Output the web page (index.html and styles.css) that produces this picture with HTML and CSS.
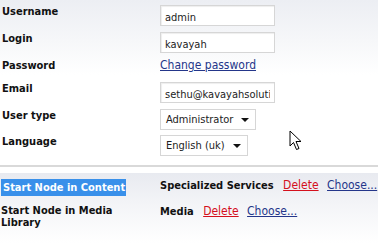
FILE: index.html
```html
<!DOCTYPE html>
<html lang="en">
<head>
    <meta charset="UTF-8">
    <title>User details</title>
    <link rel="stylesheet" href="styles.css">
</head>
<body>
    <div class="user-form">
        <div class="row row-input">
            <div class="label">Username</div>
            <div class="field"><input class="text-box" type="text" value="admin"></div>
        </div>
        <div class="row row-input">
            <div class="label">Login</div>
            <div class="field"><input class="text-box" type="text" value="kavayah"></div>
        </div>
        <div class="row row-link">
            <div class="label">Password</div>
            <div class="field"><a class="link-blue" href="#">Change password</a></div>
        </div>
        <div class="row row-input">
            <div class="label">Email</div>
            <div class="field"><input class="text-box" type="text" value="sethu@kavayahsolutions.com"></div>
        </div>
        <div class="row row-select">
            <div class="label">User type</div>
            <div class="field"><span class="drop drop-type">Administrator<span class="arrow"></span></span></div>
        </div>
        <div class="row row-select">
            <div class="label">Language</div>
            <div class="field"><span class="drop drop-lang">English (uk)<span class="arrow"></span></span></div>
        </div>
    </div>

    <div class="divider"></div>

    <div class="start-nodes">
        <div class="row node-row">
            <div class="label"><span class="selected">Start Node in Content</span></div>
            <div class="field">
                <b>Specialized Services</b>
                <a class="link-red" href="#">Delete</a>
                <a class="link-blue" href="#">Choose...</a>
            </div>
        </div>
        <div class="row node-row">
            <div class="label">Start Node in Media Library</div>
            <div class="field">
                <b>Media</b>
                <a class="link-red" href="#">Delete</a>
                <a class="link-blue" href="#">Choose...</a>
            </div>
        </div>
    </div>

    <svg class="cursor" width="14" height="22" viewBox="0 0 14 22">
        <path d="M1 1 L1 16 L4.5 12.5 L7.5 19.5 L10 18.5 L7 11.5 L12 11.5 Z" fill="#fff" stroke="#000" stroke-width="1"/>
    </svg>
</body>
</html>
```

FILE: styles.css
```css
* {
    margin: 0;
    padding: 0;
    box-sizing: border-box;
}

body {
    width: 378px;
    height: 244px;
    overflow: hidden;
    position: relative;
    font-family: "DejaVu Sans Condensed", "DejaVu Sans", sans-serif;
    font-size: 12px;
    line-height: 13px;
    color: #111;
    background: #fff;
}

.user-form {
    padding: 5px 0 0 2px;
    height: 165px;
    background: linear-gradient(#eceef3 0px, #f6f7f9 40px, #fff 75px);
}

.row {
    display: flex;
    align-items: flex-start;
}

.label {
    width: 158px;
    flex-shrink: 0;
    font-size: 11px;
    font-weight: bold;
    color: #111;
}

.row-input {
    height: 27px;
}

.row-link {
    height: 23px;
}

.row-select {
    height: 26px;
}

.text-box {
    width: 115px;
    height: 21px;
    border: 1px solid #d6d6d6;
    box-shadow: inset 1px 1px 1px #eee;
    background: #fff;
    font-family: inherit;
    font-size: 11px;
    color: #222;
    padding: 3px 4px 0;
    outline: none;
}

.drop {
    position: relative;
    display: inline-block;
    height: 21px;
    padding: 3px 5px 0;
    border: 1px solid #d6d6d6;
    background: #fff;
    font-size: 11px;
    color: #222;
}

.drop-type {
    width: 96px;
}

.drop-lang {
    width: 88px;
}

.arrow {
    position: absolute;
    right: 6px;
    top: 8px;
    border-left: 4px solid transparent;
    border-right: 4px solid transparent;
    border-top: 4px solid #111;
}

a {
    text-decoration: underline;
}

.link-blue {
    color: #24368a;
}

.link-red {
    color: #d4101c;
    margin: 0 5px 0 3px;
}

.divider {
    height: 8px;
    border-top: 2px solid #d9d9d9;
}

.start-nodes {
    height: 71px;
    padding: 6px 0 0 1px;
    background: linear-gradient(#e8eaf0 0px, #f3f4f7 30px, #fff 70px);
}

.node-row {
    margin-bottom: 9px;
}

.node-row .label {
    width: 159px;
    padding-right: 30px;
    line-height: 12px;
}

.selected {
    display: inline-block;
    background: #3990ea;
    color: #fff;
    padding: 2px 1px 2px 2px;
    line-height: 13px;
}

.node-row .field {
    white-space: nowrap;
}

.node-row b {
    font-size: 11px;
    margin-right: 3px;
}

.cursor {
    position: absolute;
    left: 289px;
    top: 130px;
}
```
